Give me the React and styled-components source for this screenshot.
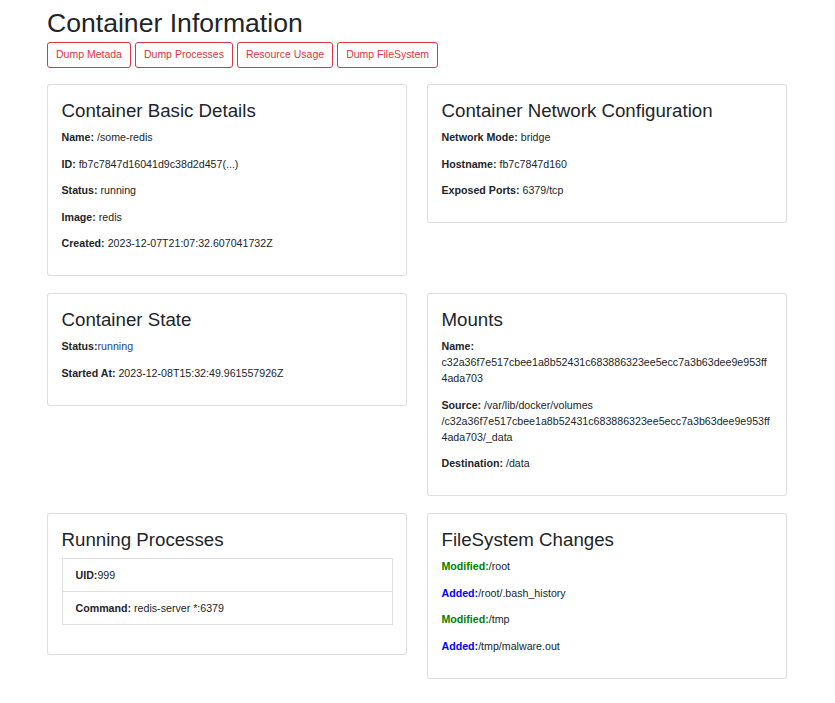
import React from "react";
import styled, { createGlobalStyle } from "styled-components";

const GlobalStyle = createGlobalStyle`
  body {
    margin: 0;
    background: #fff;
    color: #212529;
    font-family: "Liberation Sans", Arial, sans-serif;
  }
`;

const basic = [
  ["Name:", " /some-redis"],
  ["ID:", " fb7c7847d16041d9c38d2d457(...)"],
  ["Status:", " running"],
  ["Image:", " redis"],
  ["Created:", " 2023-12-07T21:07:32.607041732Z"],
];

const network = [
  ["Network Mode:", " bridge"],
  ["Hostname:", " fb7c7847d160"],
  ["Exposed Ports:", " 6379/tcp"],
];

const hash = "c32a36f7e517cbee1a8b52431c683886323ee5ecc7a3b63dee9e953ff4ada703";

const changes = [
  ["modified", "/root"],
  ["added", "/root/.bash_history"],
  ["modified", "/tmp"],
  ["added", "/tmp/malware.out"],
];

const App = () => {
  return (
    <>
      <GlobalStyle />
      <Page>
        <Title>Container Information</Title>
        <ButtonBar>
          <OutlineButton>Dump Metada</OutlineButton>
          <OutlineButton>Dump Processes</OutlineButton>
          <OutlineButton>Resource Usage</OutlineButton>
          <OutlineButton>Dump FileSystem</OutlineButton>
        </ButtonBar>

        <Row>
          <Card>
            <CardTitle>Container Basic Details</CardTitle>
            {basic.map(([k, v]) => (
              <Field key={k}>
                <b>{k}</b>
                {v}
              </Field>
            ))}
          </Card>
          <Card>
            <CardTitle>Container Network Configuration</CardTitle>
            {network.map(([k, v]) => (
              <Field key={k}>
                <b>{k}</b>
                {v}
              </Field>
            ))}
          </Card>
        </Row>

        <Row>
          <Card>
            <CardTitle>Container State</CardTitle>
            <Field>
              <b>Status:</b>
              <StateValue>running</StateValue>
            </Field>
            <Field>
              <b>Started At:</b> 2023-12-08T15:32:49.961557926Z
            </Field>
          </Card>
          <Card>
            <CardTitle>Mounts</CardTitle>
            <Field>
              <b>Name:</b> {hash}
            </Field>
            <Field>
              <b>Source:</b> /var/lib/docker/volumes /{hash}/_data
            </Field>
            <Field>
              <b>Destination:</b> /data
            </Field>
          </Card>
        </Row>

        <Row>
          <Card>
            <CardTitle>Running Processes</CardTitle>
            <ListGroup>
              <ListItem>
                <b>UID:</b>999
              </ListItem>
              <ListItem>
                <b>Command:</b> redis-server *:6379
              </ListItem>
            </ListGroup>
          </Card>
          <Card>
            <CardTitle>FileSystem Changes</CardTitle>
            {changes.map(([kind, path], i) => (
              <Field key={i}>
                <ChangeKind kind={kind}>
                  {kind === "modified" ? "Modified:" : "Added:"}
                </ChangeKind>
                {path}
              </Field>
            ))}
          </Card>
        </Row>
      </Page>
    </>
  );
};

export default App;

const Page = styled.div`
  padding: 7px 48px 20px 47px;
`;

const Title = styled.h1`
  margin: 0 0 3px;
  font-size: 26.6px;
  font-weight: 400;
  line-height: 32px;
  color: #212529;
`;

const ButtonBar = styled.div`
  display: flex;
  gap: 4px;
  margin-bottom: 16.5px;
`;

const OutlineButton = styled.button`
  font-family: "Liberation Sans", Arial, sans-serif;
  font-size: 10.5px;
  line-height: 15.75px;
  padding: 4px 8px;
  color: #dc3545;
  background: #fff;
  border: 1px solid #dc3545;
  border-radius: 3px;
  cursor: pointer;
`;

const Row = styled.div`
  display: flex;
  align-items: flex-start;
  gap: 20px;
  margin-bottom: 17px;
`;

const Card = styled.div`
  flex: 1;
  min-width: 0;
  border: 1px solid rgba(0, 0, 0, 0.125);
  border-radius: 3px;
  padding: 13.5px;
  background: #fff;
`;

const CardTitle = styled.h4`
  margin: 0 0 6.5px;
  font-size: 18.7px;
  font-weight: 400;
  line-height: 24px;
  color: #212529;
`;

const Field = styled.p`
  margin: 0 0 10.5px;
  font-size: 10.65px;
  line-height: 16px;
  overflow-wrap: anywhere;
  b {
    font-weight: 700;
  }
`;

const StateValue = styled.span`
  color: #2a4480;
`;

const ChangeKind = styled.b`
  color: ${(p) => (p.kind === "modified" ? "#008000" : "#0000ff")};
`;

const ListGroup = styled.ul`
  list-style: none;
  margin: 0 0 15px;
  padding: 0;
`;

const ListItem = styled.li`
  font-size: 10.65px;
  line-height: 16px;
  padding: 8px 13px;
  border: 1px solid rgba(0, 0, 0, 0.125);
  & + & {
    border-top: 0;
  }
`;
